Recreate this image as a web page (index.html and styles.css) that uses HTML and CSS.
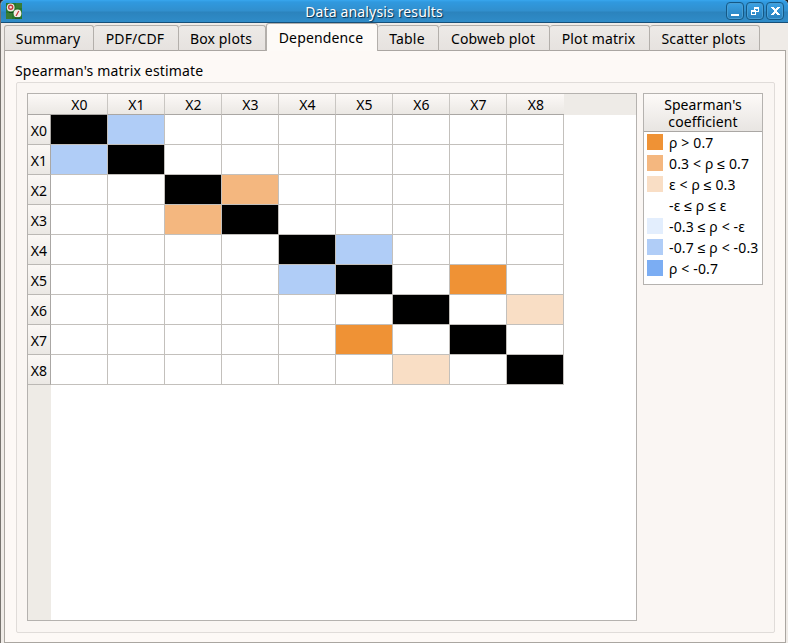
FILE: index.html
```html
<!DOCTYPE html>
<html lang="en">
<head>
<meta charset="utf-8">
<title>Data analysis results</title>
<link rel="stylesheet" href="styles.css">
</head>
<body>
<div class="window">
  <header class="titlebar">
    <svg class="logo" width="16" height="16" viewBox="0 0 16 16"><rect width="16" height="16" fill="#26752c"/><path d="M0 10h6v6H0zM10 0h6v5h-6z" fill="#397c35"/><circle cx="4.7" cy="4.5" r="3.9" fill="#f1e6e1"/><circle cx="4.7" cy="4.2" r="2" fill="none" stroke="#c43a38" stroke-width="1.4"/><circle cx="11.5" cy="10.4" r="3.9" fill="#f5eee9"/><path d="M10 13l2.8-5" stroke="#c43a38" stroke-width="1.2"/><path d="M3 9.5h4M9 15h5" stroke="#12491b"/></svg>
    <h1 class="title">Data analysis results</h1>
    <div class="controls">
      <span class="control"><svg width="16" height="16"><path d="M4 11h8v2H4z"/></svg></span>
      <span class="control"><svg width="16" height="16"><path fill-rule="evenodd" d="M7 4h5v5H9V8h2V6H8v1H7zM4 7h5v5H4zm1 2v2h3V9z"/></svg></span>
      <span class="control"><svg width="16" height="16"><path d="M4 4h3v1h1v1h1V5h1V4h3v1h-1v1h-1v1h-1v2h1v1h1v1h1v1h-3v-1H9v-1H8v1H7v1H4v-1h1v-1h1V9h1V7H6V6H5V5H4z"/></svg></span>
    </div>
  </header>
  <nav class="tabs">
    <span class="tab summary">Summary</span><span class="tab pdf">PDF/CDF</span><span class="tab box">Box plots</span><span class="tab dependence active">Dependence</span><span class="tab table">Table</span><span class="tab cobweb">Cobweb plot</span><span class="tab plot">Plot matrix</span><span class="tab scatter">Scatter plots</span>
  </nav>
  <main class="pane">
    <h2 class="heading">Spearman's matrix estimate</h2>
    <section class="group">
      <div class="view">
        <div class="col-head"><span class="corner"></span><span>X0</span><span>X1</span><span>X2</span><span>X3</span><span>X4</span><span>X5</span><span>X6</span><span>X7</span><span>X8</span></div>
        <div class="view-body">
          <div class="row-head"><span>X0</span><span>X1</span><span>X2</span><span>X3</span><span>X4</span><span>X5</span><span>X6</span><span>X7</span><span>X8</span></div>
          <div class="matrix">
            <i class="k"></i><i class="b2"></i><i></i><i></i><i></i><i></i><i></i><i></i><i></i>
            <i class="b2"></i><i class="k"></i><i></i><i></i><i></i><i></i><i></i><i></i><i></i>
            <i></i><i></i><i class="k"></i><i class="o2"></i><i></i><i></i><i></i><i></i><i></i>
            <i></i><i></i><i class="o2"></i><i class="k"></i><i></i><i></i><i></i><i></i><i></i>
            <i></i><i></i><i></i><i></i><i class="k"></i><i class="b2"></i><i></i><i></i><i></i>
            <i></i><i></i><i></i><i></i><i class="b2"></i><i class="k"></i><i></i><i class="o3"></i><i></i>
            <i></i><i></i><i></i><i></i><i></i><i></i><i class="k"></i><i></i><i class="o1"></i>
            <i></i><i></i><i></i><i></i><i></i><i class="o3"></i><i></i><i class="k"></i><i></i>
            <i></i><i></i><i></i><i></i><i></i><i></i><i class="o1"></i><i></i><i class="k"></i>
          </div>
        </div>
      </div>
      <aside class="legend">
        <h3 class="legend-title">Spearman's<br>coefficient</h3>
        <ul class="legend-list">
          <li><b class="o3"></b><span>ρ &gt; 0.7</span></li>
          <li><b class="o2"></b><span>0.3 &lt; ρ ≤ 0.7</span></li>
          <li><b class="o1"></b><span>ε &lt; ρ ≤ 0.3</span></li>
          <li><b></b><span>-ε ≤ ρ ≤ ε</span></li>
          <li><b class="b1"></b><span>-0.3 ≤ ρ &lt; -ε</span></li>
          <li><b class="b2"></b><span>-0.7 ≤ ρ &lt; -0.3</span></li>
          <li><b class="b3"></b><span>ρ &lt; -0.7</span></li>
        </ul>
      </aside>
    </section>
  </main>
</div>
</body>
</html>
```
FILE: styles.css
```css
* { box-sizing: border-box; }
body { margin: 0; background: #222; }
h1, h2, h3, ul { margin: 0; padding: 0; font-weight: 400; font-size: 14px; }
.window {
  width: 788px; height: 643px; overflow: hidden;
  display: flex; flex-direction: column;
  background: #efebe7; border-left: 1px solid #77736f;
  border-radius: 5px 5px 0 0;
  font: 14px/18px "Noto Sans", sans-serif; color: #000; white-space: nowrap;
}
.titlebar {
  height: 23px; flex: none; display: flex; align-items: center;
  padding: 0 4px 0 5px; margin-left: -1px;
  background: linear-gradient(#38a7ef 0, #3099df 2px, #318fcd 11px, #2b83bd 12px, #2f8bc7 21px);
  border-bottom: 1px solid #164f78;
}
.logo { margin: 0 0 1px 1px; }
.title { flex: 1; text-align: center; color: #fff; text-shadow: 1px 1px 1px #082b45; padding: 2px 0 0; letter-spacing: .15px; }
.controls { display: flex; gap: 2px; }
.control {
  width: 18px; height: 18px; border: 1px solid #155885; border-radius: 4px;
  background: linear-gradient(#3ca2e4, #2880bc); box-shadow: inset 0 0 0 1px #479fd5;
}
.control svg { display: block; fill: #fff; }
.tabs { height: 28px; flex: none; display: flex; align-items: flex-end; padding: 0 0 0 3px; position: relative; z-index: 1; }
.tab {
  height: 26px; padding: 4px 2px 0 0; text-align: center; letter-spacing: .15px;
  border: 1px solid #b3afab; border-left-width: 0; border-bottom-color: #aaa6a2;
  border-radius: 3px 3px 0 0; background: linear-gradient(#edeae7, #e6e2df);
}
.summary { width: 90px; border-left-width: 1px; }
.pdf { width: 85px; }
.box { width: 87px; }
.dependence { width: 112px; }
.table { width: 61px; }
.cobweb { width: 111px; }
.plot { width: 100px; }
.scatter { width: 110px; }
.tab.active { height: 28px; padding-top: 5px; border-left-width: 1px; border-bottom: 0; background: #fdfaf7; }
.pane {
  width: 782px; height: 593px; flex: none; margin: -1px 0 0 3px; padding: 11px 10px 0;
  border: 1px solid #aaa6a1; background: #fdf9f6;
}
.heading { height: 20px; letter-spacing: .17px; }
.group {
  width: 759px; height: 551px; margin-left: 1px; padding: 10px;
  display: flex; gap: 6px; align-items: flex-start;
  border: 1px solid #e0dcd9; border-radius: 2px; background: #faf6f3;
}
.view { width: 610px; height: 528px; border: 1px solid #b5b2af; background: #fff; }
.col-head { display: flex; height: 21px; background: #eeebe7; }
.col-head span {
  width: 57px; padding: 2px 0 0 1px; text-align: center; letter-spacing: .2px; background: linear-gradient(#fcf9f7, #ebe8e4);
  border-right: 1px solid #c9c6c2; border-bottom: 1px solid #aaa7a4; 
}
.col-head .corner { width: 23px; border-right: 0; }
.col-head span:last-child { border-right: 0; }
.view-body { display: flex; height: 505px; }
.row-head { width: 23px; background: #eeebe6; }
.row-head span {
  display: block; height: 30px; padding-top: 7px; text-align: center; letter-spacing: .2px;
  background: linear-gradient(#fbf8f5, #ebe8e4);
  border-right: 1px solid #aaa7a4; border-bottom: 1px solid #bbb8b4;
}
.matrix { display: grid; grid-template-columns: repeat(9, 57px); grid-auto-rows: 30px; align-content: start; }
.matrix i { border: solid #c3c0bc; border-width: 0 1px 1px 0; }
.k { background: #000; }
.o1 { background: #f9dec5; }
.o2 { background: #f4b77f; }
.o3 { background: #ef9235; }
.b1 { background: #e3eefd; }
.b2 { background: #b0cdf7; }
.b3 { background: #7badf3; }
.legend { width: 120px; height: 192px; border: 1px solid #b5b2af; background: #fff; }
.legend-title {
  height: 38px; padding-top: 2px; line-height: 17px; text-align: center; letter-spacing: .1px;
  background: linear-gradient(#fdfaf8, #e8e5e2); border-bottom: 1px solid #aaa7a4;
}
.legend-list { list-style: none; padding-left: 3px; }
.legend-list li { height: 21px; display: flex; gap: 6px; align-items: flex-start; padding-top: 2px; }
.legend-list b { width: 16px; height: 16px; }
.legend-list span { letter-spacing: .15px; }
```
